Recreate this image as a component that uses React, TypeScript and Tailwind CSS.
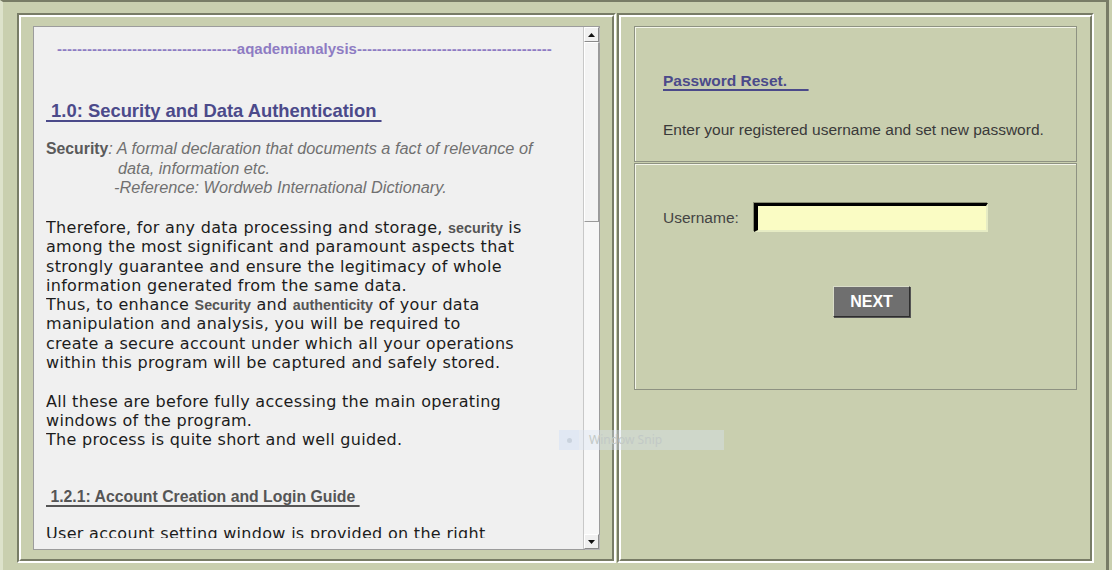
const arial = "font-['Liberation_Sans',Arial,sans-serif]";
const body = "font-['DejaVu_Sans',Verdana,sans-serif]";
const noSkip = '[text-decoration-skip-ink:none]';

const Bold = ({ children }: { children: string }) => (
  <span className={`${arial} font-bold text-[14.3px] text-[#555555] tracking-normal`}>{children}</span>
);

const bodyLines: (string | JSX.Element)[] = [
  <>Therefore, for any data processing and storage, <Bold>security</Bold> is</>,
  'among the most significant and paramount aspects that',
  'strongly guarantee and ensure the legitimacy of whole',
  'information generated from the same data.',
  <>Thus, to enhance <Bold>Security</Bold> and <Bold>authenticity</Bold> of your data</>,
  'manipulation and analysis, you will be required to',
  'create a secure account under which all your operations',
  'within this program will be captured and safely stored.',
  '',
  'All these are before fully accessing the main operating',
  'windows of the program.',
  'The process is quite short and well guided.',
];

// etched two-tone frame used by both panels
const Etched = ({ className, children }: { className: string; children: React.ReactNode }) => (
  <div className={`border-2 border-t-[#787c66] border-l-[#787c66] border-r-white border-b-white ${className}`}>
    <div className="h-full border-2 border-t-white border-l-white border-r-[#787c66] border-b-[#787c66]">
      {children}
    </div>
  </div>
);

const ScrollButton = ({ up }: { up?: boolean }) => (
  <div className="h-[15px] w-[15px] flex items-center justify-center bg-[#f0f0f0] border border-t-white border-l-white border-r-[#8a8a8a] border-b-[#8a8a8a] shadow-[1px_1px_0_#b5b5b5]">
    <svg width="7" height="4" viewBox="0 0 7 4">
      {up ? <path d="M3.5 0 L7 4 L0 4 Z" fill="#111" /> : <path d="M0 0 L7 0 L3.5 4 Z" fill="#111" />}
    </svg>
  </div>
);

const App = () => {
  return (
    <div className="relative w-[1112px] h-[570px] bg-[#c9cfaf] overflow-hidden">
      <div className="w-[1109px] h-[570px] border-t-2 border-t-[#787c66] border-r-[3px] border-r-[#787c66] border-l-[3px] border-l-[#dde2cb] pl-[14px] pt-[11px] flex gap-[1px]">
        {/* left: documentation */}
        <Etched className="w-[599px] h-[550px]">
          <div className="pl-[12px] pt-[9px]">
            <div className="w-[567px] h-[524px] flex bg-[#f0f0f0] border border-[#9c9c9c]">
              <div className="flex-1 px-[12px] pt-[11px] pb-[11px]">
                <div className="h-full overflow-hidden">
                  <div className={`${arial} font-bold text-[15px] leading-[22px] text-[#8e7cc3] whitespace-nowrap pl-[11px]`}>
                    ------------------------------------aqademianalysis---------------------------------------
                  </div>
                  <div className={`${arial} ${noSkip} mt-[39px] font-bold text-[18.4px] leading-[24px] text-[#4b4a8a] whitespace-pre underline decoration-[2px] underline-offset-[3px]`}>
                    {' 1.0: Security and Data Authentication '}
                  </div>
                  <div className={`${arial} mt-[16px] text-[16px] leading-[19.5px] text-[#707070] whitespace-nowrap`}>
                    <div>
                      <span className="font-bold text-[#5a5a5a] text-[15.8px]">Security</span>
                      <span className="italic text-[16.3px]">: A formal declaration that documents a fact of relevance of</span>
                    </div>
                    <div className="italic text-[16.3px] pl-[72px]">data, information etc.</div>
                    <div className="italic text-[16.3px] pl-[68px]">-Reference: Wordweb International Dictionary.</div>
                  </div>
                  <div className={`${body} mt-[20.5px] text-[16px] tracking-[0.3px] text-[#1c1c1c]`}>
                    {bodyLines.map((line, i) => (
                      <div key={i} className="h-[19.3px] leading-[19.3px] whitespace-nowrap">
                        {line}
                      </div>
                    ))}
                  </div>
                  <div className={`${arial} ${noSkip} mt-[36px] font-bold text-[15.8px] leading-[22px] text-[#555555] whitespace-pre underline decoration-[2px] underline-offset-[3px]`}>
                    {' 1.2.1: Account Creation and Login Guide '}
                  </div>
                  <div className={`${body} mt-[16.3px] text-[16px] tracking-[0.3px] leading-[19.3px] text-[#1c1c1c] whitespace-nowrap`}>
                    User account setting window is provided on the right
                  </div>
                </div>
              </div>
              {/* scrollbar */}
              <div className="w-[16px] flex flex-col bg-[#f7f7f7] border-l border-[#c8c8c8]">
                <ScrollButton up />
                <div className="h-[180px] bg-[#f3f3f3] border border-t-white border-l-white border-r-[#9a9a9a] border-b-[#9a9a9a]" />
                <div className="flex-1" />
                <ScrollButton />
              </div>
            </div>
          </div>
        </Etched>

        {/* right: password reset */}
        <Etched className="w-[477px] h-[550px]">
          <div className="pl-[13px] pt-[9px]">
            <div className="w-[443px] h-[136px] border border-[#8e9282] shadow-[inset_1px_1px_0_#f4f6ea] pl-[28px] pt-[44px]">
              <div className={`${arial} ${noSkip} font-bold text-[15.5px] leading-[20px] text-[#4b4a8a] whitespace-pre underline decoration-[2px] underline-offset-[3px]`}>
                {'Password Reset.     '}
              </div>
              <div className={`${arial} mt-[29px] text-[15.5px] leading-[20px] text-[#3a3a3a] whitespace-nowrap`}>
                Enter your registered username and set new password.
              </div>
            </div>
            <div className="w-[443px] h-[227px] mt-[1px] border border-[#8e9282] shadow-[inset_1px_1px_0_#f4f6ea] pl-[28px] pt-[39px]">
              <div className="flex items-center">
                <span className={`${arial} text-[15.5px] text-[#444444] w-[91px]`}>Username:</span>
                <div className="w-[234px] h-[29px] bg-[#fafcc4] border-t-[3px] border-l-[4px] border-t-black border-l-black border-r-2 border-b-2 border-r-[#e6ecc4] border-b-[#e6ecc4] shadow-[-1px_-1px_0_#8a8e74]" />
              </div>
              <div className="flex mt-[54px] pl-[170px]">
                <div className={`${arial} w-[77px] h-[31px] flex items-center justify-center bg-[#6f6f6f] text-white font-bold text-[16px] border border-t-[#d9ddc9] border-l-[#d9ddc9] border-r-[#2e2e2e] border-b-[#2e2e2e] shadow-[1px_1px_0_#555]`}>
                  NEXT
                </div>
              </div>
            </div>
          </div>
        </Etched>
      </div>

      {/* faint snipping-tool hint over the page */}
      <div className="absolute left-[559px] top-[430px] w-[165px] h-[20px] flex items-center bg-[#d9e4f3]/40">
        <div className="w-[20px] h-full flex items-center justify-center bg-[#dbe6f6]/50">
          <div className="w-[5px] h-[5px] rounded-full bg-[#c9d2dd]" />
        </div>
        <span className="ml-[10px] font-['Segoe_UI','Noto_Sans',sans-serif] text-[12px] text-[#c2c9c6]">Window Snip</span>
      </div>
    </div>
  );
};

export default App;
